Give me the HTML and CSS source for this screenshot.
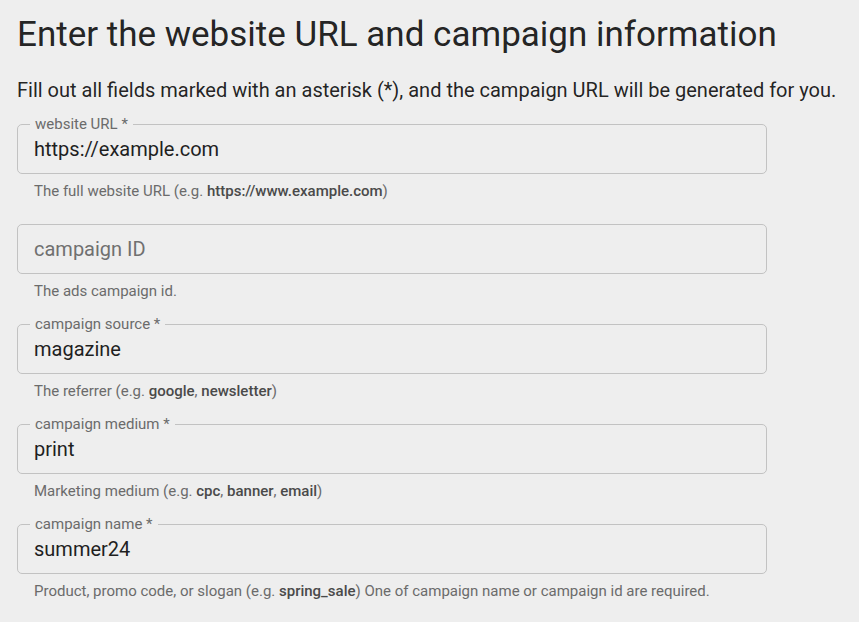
FILE: index.html
```html
<!DOCTYPE html>
<html lang="en">
<head>
  <meta charset="UTF-8" />
  <meta name="viewport" content="width=device-width, initial-scale=1.0"/>
  <title>Campaign URL Builder</title>
  <link rel="stylesheet" href="styles.css">
</head>
<body>
  <div class="page">
    <h1>Enter the website URL and campaign information</h1>
    <p class="intro">Fill out all fields marked with an asterisk (*), and the campaign URL will be generated for you.</p>

    <form class="campaign-form">
      <div class="form-group">
        <div class="field">
          <label for="websiteUrl">website URL *</label>
          <input type="text" id="websiteUrl" value="https://example.com" />
        </div>
        <p class="helper">The full website URL (e.g. <b>https://www.example.com</b>)</p>
      </div>

      <div class="form-group">
        <div class="field">
          <input type="text" id="campaignId" placeholder="campaign ID" />
        </div>
        <p class="helper">The ads campaign id.</p>
      </div>

      <div class="form-group">
        <div class="field">
          <label for="campaignSource">campaign source *</label>
          <input type="text" id="campaignSource" value="magazine" />
        </div>
        <p class="helper">The referrer (e.g. <b>google</b>, <b>newsletter</b>)</p>
      </div>

      <div class="form-group">
        <div class="field">
          <label for="campaignMedium">campaign medium *</label>
          <input type="text" id="campaignMedium" value="print" />
        </div>
        <p class="helper">Marketing medium (e.g. <b>cpc</b>, <b>banner</b>, <b>email</b>)</p>
      </div>

      <div class="form-group">
        <div class="field">
          <label for="campaignName">campaign name *</label>
          <input type="text" id="campaignName" value="summer24" />
        </div>
        <p class="helper">Product, promo code, or slogan (e.g. <b>spring_sale</b>) One of campaign name or campaign id are required.</p>
      </div>
    </form>
  </div>
</body>
</html>
```

FILE: styles.css
```css
body {
  font-family: Roboto, "Liberation Sans", Arial, sans-serif;
  background-color: #eeeeee;
  color: rgba(0, 0, 0, 0.87);
  margin: 0;
}

.page {
  padding: 14px 17px 0;
}

h1 {
  font-size: 35px;
  font-weight: 400;
  line-height: 42px;
  margin: 0;
}

.intro {
  font-size: 20px;
  line-height: 28px;
  margin: 20px 0 20px;
}

.campaign-form {
  width: 750px;
}

.form-group {
  height: 100px;
}

.field {
  position: relative;
  height: 50px;
  box-sizing: border-box;
  border: 1px solid #c2c2c2;
  border-radius: 5px;
}

.field label {
  position: absolute;
  top: -10px;
  left: 12px;
  padding: 0 5px;
  background-color: #eeeeee;
  font-size: 15px;
  line-height: 18px;
  color: #6b6b6b;
}

.field input {
  width: 100%;
  height: 100%;
  box-sizing: border-box;
  padding: 0 16px;
  border: none;
  background: transparent;
  font-family: inherit;
  font-size: 20px;
  color: #1f1f1f;
  outline: none;
}

.field input::placeholder {
  color: #707070;
}

.helper {
  margin: 7px 0 0 17px;
  font-size: 15px;
  line-height: 20px;
  color: #6b6b6b;
}

.helper b {
  font-weight: 500;
  color: #4a4a4a;
}
```
